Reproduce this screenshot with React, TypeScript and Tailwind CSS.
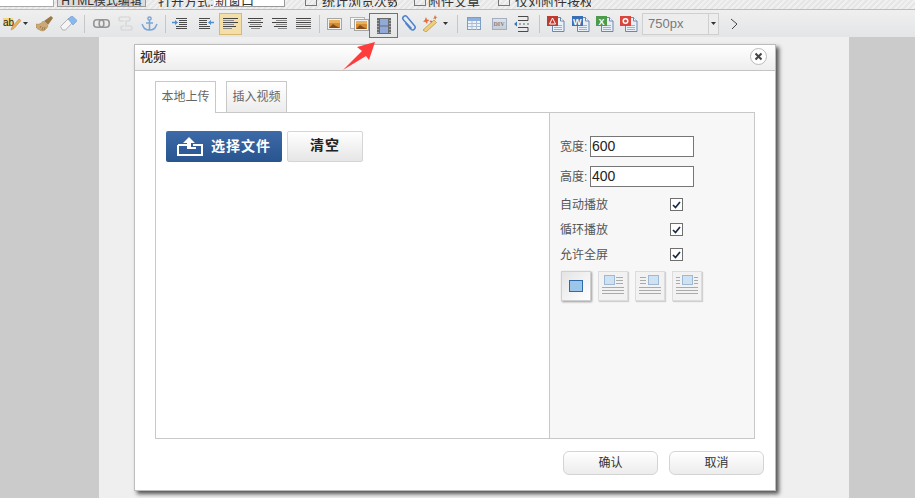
import React from "react";

const S = ({ w = "w-6", children }: { w?: string; children?: React.ReactNode }) => (
  <div className={`${w} h-full flex items-center justify-center shrink-0`}>{children}</div>
);
const Sep = ({ ml }: { ml: string }) => <div className={`${ml} w-px h-[18px] bg-[#c4c6c8] shrink-0`} />;

const Caret = () => (
  <svg width="5" height="3" viewBox="0 0 5 3" className="shrink-0"><path d="M0 0h5L2.500 3z" fill="#333" /></svg>
);

const Lines = ({ rows }: { rows: [number, number][] }) => (
  <svg width="15" height="13" viewBox="0 0 15 13">
    {rows.map(([x, w], i) => (
      <rect key={i} x={x} y={i * 2 + 1} width={w} height="1" fill={i % 2 ? "#8a8a8a" : "#444"} />
    ))}
  </svg>
);

const Photo = ({ stack }: { stack?: boolean }) => (
  <svg width={stack ? 19 : 15} height="14" viewBox={stack ? "0 0 19 14" : "0 0 15 14"}>
    {stack && <rect x="0.500" y="0.500" width="14" height="11" fill="#f6f6f6" stroke="#b5b5b5" />}
    <g transform={stack ? "translate(4 2)" : "translate(0 1)"}>
      <rect x="0.500" y="0.500" width="14" height="11" fill="#f1f1f1" stroke="#a5a5a5" />
      <rect x="2" y="2" width="11" height="8" fill="#d88a33" />
      <rect x="2" y="2" width="11" height="3" fill="#eab15c" />
      <path d="M2 10l4-4 3 2 4 2z" fill="#7d4c22" />
    </g>
  </svg>
);

const Doc = ({ color, children }: { color: string; children?: React.ReactNode }) => (
  <svg width="18" height="17" viewBox="0 0 18 17">
    <path d="M5.500 2.500h8l3.500 3.500v10.500h-11.500z" fill="#e9eff7" stroke="#6d87ab" />
    <path d="M13.500 2.500V6H17" fill="#fff" stroke="#6d87ab" />
    <path d="M7 10.500h8M7 12.500h8M7 14.500h8" stroke="#9fb2cc" />
    <rect x="0" y="1" width="11" height="10" fill={color} />
    {children}
  </svg>
);

const Mini = ({ kind }: { kind: number }) => {
  const active = kind === 0;
  const ix = kind === 1 ? 3 : kind === 2 ? 10 : 7;
  return (
    <div
      className={`w-[30px] h-[30px] flex items-center justify-center border ${
        active
          ? "bg-gradient-to-br from-[#e4e4e4] to-white border-[#cfcfcf] shadow-[1px_1px_2px_#999]"
          : "bg-[#f2f2f2] border-[#dcdcdc] shadow-[1px_1px_1px_#d0d0d0]"
      }`}
    >
      {active ? (
        <svg width="14" height="12" viewBox="0 0 14 12">
          <rect x="0.500" y="0.500" width="13" height="11" fill="#9cc5ea" stroke="#2e6aa8" />
        </svg>
      ) : (
        <svg width="24" height="22" viewBox="0 0 24 22">
          <rect x={ix + 0.5} y="0.500" width="10" height="9" fill="#cfe2f3" stroke="#9db9d3" />
          <path
            d={
              kind === 1
                ? "M15 2.500h7M15 5.500h7M15 8.500h7"
                : kind === 2
                ? "M2 2.500h6M2 5.500h6M2 8.500h6"
                : "M1 2.500h4M1 5.500h4M1 8.500h4M19 2.500h4M19 5.500h4M19 8.500h4"
            }
            stroke="#aaa"
          />
          <path d="M1 12.500h22M1 15.500h22M1 18.500h22" stroke="#aaa" />
        </svg>
      )}
    </div>
  );
};

const Check = () => (
  <div className="w-[13px] h-[13px] border border-[#6f6f6f] bg-white flex items-center justify-center">
    <svg width="9" height="8" viewBox="0 0 9 8"><path d="M1 4l2.500 2.500L8 1" fill="none" stroke="#1a2a44" strokeWidth="1.700" /></svg>
  </div>
);

const Field = ({ label, value }: { label: string; value: string }) => (
  <div className="flex items-center h-[21px]">
    <span className="w-[30px] text-[12px] text-[#555] leading-none">{label}:</span>
    <div className="w-[104px] h-[21px] border border-[#767676] bg-white pl-px text-[14px] leading-[19px] text-[#222] font-['Liberation_Sans',sans-serif]">
      {value}
    </div>
  </div>
);

const CheckRow = ({ label }: { label: string }) => (
  <div className="flex items-center h-[25px]">
    <span className="w-[110px] text-[12px] text-[#555] leading-none">{label}</span>
    <Check />
  </div>
);

export default function App() {
  return (
    <div className="relative w-[915px] h-[498px] overflow-hidden bg-[#cbcbcb] flex flex-col font-['Liberation_Sans','Noto_Sans_CJK_SC',sans-serif]">
      {/* clipped row above the toolbar */}
      <div className="h-[10px] shrink-0 overflow-hidden border-b border-[#bdbdbd] flex items-end bg-[repeating-linear-gradient(135deg,#e6e6e6_0px,#e6e6e6_2px,#f0f0f0_2px,#f0f0f0_4px)] text-[13px] text-[#333] leading-none">
        <div className="w-[54px] h-[7px] bg-white border-r border-b border-[#aaa] self-start shrink-0" />
        <div className="ml-[3px] w-[89px] h-[7px] self-start shrink-0 bg-[#dcdcdc] border border-t-0 border-[#999] overflow-hidden flex justify-center items-end">
          <span className="text-[12px] text-[#333] whitespace-nowrap -mb-px">HTML模式编辑</span>
        </div>
        <div className="ml-[12px] w-[56px] h-[7px] self-start shrink-0 overflow-hidden flex items-end whitespace-nowrap"><span className="-mb-px">打开方式:</span></div>
        <div className="w-[71px] h-[7px] self-start shrink-0 overflow-hidden bg-white flex items-end border-b border-r border-[#999] whitespace-nowrap pl-px">
          <span className="-mb-px">新窗口</span>
        </div>
        <div className="ml-[20px] w-[12px] h-[6px] self-start shrink-0 border border-t-0 border-[#777]" />
        <div className="ml-[5px] w-[75px] h-[7px] self-start shrink-0 overflow-hidden flex items-end whitespace-nowrap"><span className="-mb-px">统计浏览次数</span></div>
        <div className="ml-[17px] w-[12px] h-[6px] self-start shrink-0 border border-t-0 border-[#777]" />
        <div className="ml-[2px] w-[56px] h-[7px] self-start shrink-0 overflow-hidden flex items-end whitespace-nowrap"><span className="-mb-px">附件文章</span></div>
        <div className="ml-[14px] w-[12px] h-[6px] self-start shrink-0 border border-t-0 border-[#777]" />
        <div className="ml-[5px] w-[76px] h-[7px] self-start shrink-0 overflow-hidden flex items-end whitespace-nowrap"><span className="-mb-px">仅刘附件按权</span></div>
      </div>

      {/* toolbar */}
      <div className="h-[27px] shrink-0 flex items-center bg-gradient-to-b from-[#efefef] to-[#e3e5e7]">
        <S w="w-[32px]">
          <div className="flex items-center gap-[2px] -ml-[1px]">
            <svg width="18" height="14" viewBox="0 0 18 14">
              <rect x="0" y="1" width="10" height="8" fill="#f5d67c" />
              <text x="0" y="8.500" fontSize="10" fill="#222" fontFamily="Liberation Sans">ab</text>
              <path d="M8 13l1-3 7-8 2 1.500-7 8z" fill="#e8b25a" stroke="#b08050" strokeWidth=".5" />
            </svg>
            <Caret />
          </div>
        </S>
        <S>
          <svg width="17" height="16" viewBox="0 0 17 16">
            <path d="M0 8c3 1 6-1 7-3l5 5c-1 2-3 5-6 5-1 0-1-1-1-1l-1 .5-1-1.500-1 .5-1-2-1 .5z" fill="#cda875" stroke="#a17f4c" strokeWidth=".5" />
            <path d="M5 10l-1 2M7 11l-1 3M9 11l-1 3" stroke="#8d6b3b" strokeWidth=".7" />
            <path d="M8 5l7-5 2 2-5 7z" fill="#9a7746" />
          </svg>
        </S>
        <S>
          <svg width="17" height="15" viewBox="0 0 17 15">
            <path d="M.500 10.500L9 2l4 4-7.500 8h-3z" fill="#f5f5f5" stroke="#b2b2b2" />
            <path d="M8 3l3-2.500h2L16.500 4v1.500L13 9z" fill="#8ab8ea" stroke="#6a9bd4" strokeWidth=".6" />
          </svg>
        </S>
        <Sep ml="ml-[4px]" />
        <div className="ml-[4px]" />
        <S>
          <svg width="17" height="9" viewBox="0 0 17 9" fill="none" stroke="#959595" strokeWidth="1.600">
            <rect x=".8" y=".8" width="10" height="7.400" rx="3" /><rect x="6.200" y=".8" width="10" height="7.400" rx="3" />
          </svg>
        </S>
        <S>
          <svg width="15" height="15" viewBox="0 0 15 15" fill="none" stroke="#dadada" strokeWidth="1.700">
            <path d="M6 5H3a2 2 0 0 1 0-4h7a2 2 0 0 1 0 4H8v5h4a2 2 0 0 1 0 4H5a2 2 0 0 1 0-4h1" />
          </svg>
        </S>
        <S>
          <svg width="17" height="16" viewBox="0 0 17 16" fill="none" stroke="#7aa5d6" strokeWidth="1.500">
            <circle cx="8.500" cy="2.500" r="1.600" /><path d="M8.500 4v10M5 7h7M1 8l1 2c1 3 3 4 6.500 4s5.500-1 6.500-4l1-2" />
          </svg>
        </S>
        <Sep ml="ml-[4px]" />
        <div className="ml-px" />
        <S>
          <svg width="15" height="13" viewBox="0 0 15 13">
            <path d="M4 1.500h11M7 3.500h8M7 5.500h8M7 7.500h8M4 9.500h11M4 11.500h11" stroke="#4a4a4a" />
            <path d="M0 2h1.500v2.500H5V6H1.500v2.500H0z" fill="none" />
            <path d="M6 5.500L3 3v1.800H0v1.400h3V8z" fill="#4a90d9" />
          </svg>
        </S>
        <div className="ml-[3px]" />
        <S>
          <svg width="15" height="13" viewBox="0 0 15 13">
            <path d="M0 1.500h11M0 3.500h8M0 5.500h8M0 7.500h8M0 9.500h11M0 11.500h11" stroke="#4a4a4a" />
            <path d="M9 5.500L12 3v1.800h3v1.400h-3V8z" fill="#4a90d9" />
          </svg>
        </S>
        <div className="ml-px" />
        <div className="w-[23px] h-[22px] shrink-0 bg-[#f5dfa9] border border-[#d9b86e] flex items-center justify-center">
          <Lines rows={[[0, 15], [0, 11], [0, 15], [0, 11], [0, 13], [0, 9]]} />
        </div>
        <div className="ml-px" />
        <S><Lines rows={[[0, 15], [2, 11], [0, 15], [2, 11], [1, 13], [3, 9]]} /></S>
        <div className="ml-px" />
        <S w="w-[23px]"><Lines rows={[[0, 15], [4, 11], [0, 15], [4, 11], [2, 13], [6, 9]]} /></S>
        <S><Lines rows={[[0, 15], [0, 15], [0, 15], [0, 15], [0, 15], [0, 15]]} /></S>
        <Sep ml="ml-[4px]" />
        <div className="ml-[2px]" />
        <S><Photo /></S>
        <div className="ml-[3px]" />
        <S w="w-[20px]"><Photo stack /></S>
        <div className="relative z-10 self-start mt-[3px] w-[29px] h-[25px] shrink-0 border border-[#e8403a] flex items-center justify-center">
          <svg width="14" height="16" viewBox="0 0 14 16">
            <rect width="14" height="16" fill="#6b6b6b" />
            <rect x="3" y="1" width="8" height="6.500" fill="#8fa9d8" />
            <rect x="3" y="8.500" width="8" height="6.500" fill="#8fa9d8" />
            <path d="M1 2v1M1 5v1M1 8v1M1 11v1M1 14v1M13 2v1M13 5v1M13 8v1M13 11v1M13 14v1" stroke="#ddd" />
          </svg>
        </div>
        <S w="w-[20px]">
          <svg width="15" height="17" viewBox="0 0 15 17" fill="none" stroke="#4d82cc" strokeWidth="1.500">
            <path d="M10.500 13.500L2.500 5a2.300 2.300 0 0 1 3.500-3.300l7.500 9a2.500 2.500 0 0 1-4 3.200L4.500 8" />
          </svg>
        </S>
        <S w="w-[33px]">
          <div className="flex items-center gap-[3px]">
            <svg width="18" height="17" viewBox="0 0 18 17">
              <path d="M1 15l11-10 2.500 2.500L4 17z" fill="#f0cf77" stroke="#a9853c" strokeWidth=".6" />
              <path d="M4 2l1 2.500 2.500.5-2 1.500-.5 2.500-1.500-2L1 6.500 2.800 5z" fill="#e2703a" />
              <path d="M13 0l.8 1.700L15.500 2l-1.500 1-.2 1.700L12.500 3.500 11 3.800 12 2.500z" fill="#e2703a" />
              <path d="M9 5l.5 1 1 .5-1 .5-.5 1-.5-1-1-.5 1-.5z" fill="#d9534f" />
            </svg>
            <Caret />
          </div>
        </S>
        <Sep ml="ml-[6px]" />
        <div className="ml-[4px]" />
        <S>
          <svg width="14" height="13" viewBox="0 0 14 13">
            <rect x=".5" y=".5" width="13" height="12" fill="#eef3fa" stroke="#7d9cc6" />
            <rect x="1" y="1" width="12" height="3" fill="#8fb0dc" />
            <path d="M1 6.500h12M1 9.500h12M5 4v9M9.500 4v9" stroke="#a9bcd6" />
          </svg>
        </S>
        <div className="ml-px" />
        <S>
          <div className="w-[15px] h-[12px] border border-[#a3aec0] bg-gradient-to-b from-[#dfe2e8] to-[#c8ccd3] flex items-center justify-center text-[6px] leading-none text-[#77808e] font-['Liberation_Serif',serif] font-bold">
            DIV
          </div>
        </S>
        <S w="w-[20px]">
          <svg width="15" height="16" viewBox="0 0 15 16" fill="none" stroke="#4a4a4a">
            <path d="M4 .5h10v4H4M4 15.500h10v-4H4" />
            <path d="M5 8h2M9 8h2M13 8h2" stroke="#666" />
            <path d="M0 8l3-2.500v5z" fill="#3a76b8" stroke="none" />
          </svg>
        </S>
        <Sep ml="ml-[8px]" />
        <div className="ml-[4px]" />
        <S>
          <Doc color="#bf3a30">
            <path d="M5.500 3l3 6h-6z" fill="none" stroke="#fff" />
          </Doc>
        </S>
        <div className="ml-px" />
        <S>
          <Doc color="#3b6fb5">
            <text x="1" y="9.500" fontSize="9" fill="#fff" fontWeight="bold" fontFamily="Liberation Sans">W</text>
          </Doc>
        </S>
        <S>
          <Doc color="#4d9a4d">
            <text x="2.500" y="9.500" fontSize="9" fill="#fff" fontWeight="bold" fontFamily="Liberation Sans">X</text>
          </Doc>
        </S>
        <S>
          <Doc color="#d9463e">
            <circle cx="5.500" cy="6" r="3" fill="#fff" /><circle cx="5.500" cy="6" r="1.500" fill="#d9463e" />
          </Doc>
        </S>
        <div className="ml-px w-[77px] h-[22px] shrink-0 border border-[#cfcfcf] bg-[#ededed] flex">
          <div className="flex-1 pl-[5px] text-[13px] leading-[20px] text-[#7a7a7a]">750px</div>
          <div className="w-[10px] border-l border-[#cfcfcf] flex items-center justify-center"><Caret /></div>
        </div>
        <div className="ml-[10px]">
          <svg width="10" height="12" viewBox="0 0 10 12" fill="none" stroke="#444"><path d="M2 1l6 5-5 5" /></svg>
        </div>
      </div>

      {/* page */}
      <div className="flex-1 flex pl-[99px]">
        <div className="w-[750px] h-full bg-[#efefef]" />
      </div>

      {/* dialog */}
      <div className="absolute left-[134px] top-[44px] w-[642px] h-[447px] bg-white border border-[#bcbcbc] shadow-[3px_3px_4px_#555] flex flex-col text-[#555]">
        <div className="h-[26px] shrink-0 border-b border-[#c4c4c4] bg-gradient-to-b from-white to-[#eeeeee] flex items-center pl-[5px] pr-[8px] pb-[2px] justify-between">
          <span className="text-[13px] font-medium text-[#333] leading-none">视频</span>
          <div className="w-[17px] h-[17px] rounded-full border border-[#bbb] bg-white flex items-center justify-center">
            <svg width="9" height="9" viewBox="0 0 9 9"><path d="M1.500 1.500l6 6M7.500 1.500l-6 6" stroke="#444" strokeWidth="2" /></svg>
          </div>
        </div>

        <div className="flex-1 pl-[20px] pr-[20px] pt-[10px] flex flex-col">
          <div className="flex h-[32px] items-end relative z-10 shrink-0">
            <div className="w-[61px] h-[32px] border border-b-0 border-[#c8c8c8] bg-white text-[12px] leading-[31px] text-center text-[#666]">本地上传</div>
            <div className="ml-[10px] w-[61px] h-[31px] mb-px border border-b-0 border-[#c8c8c8] bg-gradient-to-b from-white to-[#ececec] text-[12px] leading-[30px] text-center text-[#666]">插入视频</div>
          </div>
          <div className="-mt-px w-[600px] h-[327px] border border-[#c8c8c8] flex">
            <div className="w-[393px] shrink-0 pl-[10px] pt-[18px] flex items-start gap-[5px]">
              <div className="w-[116px] h-[31px] rounded-[2px] bg-gradient-to-b from-[#3d6ba8] to-[#28548f] flex items-center text-white">
                <svg width="26" height="21" viewBox="0 0 26 21" className="ml-[11px]">
                  <path d="M1 9v10h24V9h-9M10 9H1" fill="none" stroke="#fff" strokeWidth="2" />
                  <path d="M12 1L6 7h4v6h9v-2h-5V7h4z" fill="#fff" />
                </svg>
                <span className="ml-[8px] text-[14px] font-bold tracking-[1px] leading-none -mt-[2px]">选择文件</span>
              </div>
              <div className="w-[76px] h-[31px] rounded-[2px] border border-[#d5d5d5] bg-gradient-to-b from-white to-[#e6e6e6] text-[14px] font-bold tracking-[1px] text-[#222] leading-[27px] text-center">清空</div>
            </div>
            <div className="flex-1 border-l border-[#c8c8c8] bg-[#f7f7f7] pl-[10px] pt-[23px] flex flex-col">
              <Field label="宽度" value="600" />
              <div className="mt-[9px]"><Field label="高度" value="400" /></div>
              <div className="mt-[5px]">
                <CheckRow label="自动播放" />
                <CheckRow label="循环播放" />
                <CheckRow label="允许全屏" />
              </div>
              <div className="mt-[4px] ml-px flex gap-[7px]">
                <Mini kind={0} /><Mini kind={1} /><Mini kind={2} /><Mini kind={3} />
              </div>
            </div>
          </div>
          <div className="flex justify-end gap-[11px] mt-[12px] mr-[-9px]">
            <div className="w-[95px] h-[24px] rounded-[6px] border border-[#d4d4d4] bg-gradient-to-b from-white to-[#ececec] text-[12px] leading-[22px] text-center text-[#333]">确认</div>
            <div className="w-[95px] h-[24px] rounded-[6px] border border-[#d4d4d4] bg-gradient-to-b from-white to-[#ececec] text-[12px] leading-[22px] text-center text-[#333]">取消</div>
          </div>
        </div>
      </div>

      {/* annotation arrow */}
      <svg className="absolute left-[340px] top-[40px]" width="40" height="32" viewBox="0 0 40 32">
        <path d="M35 2L17 7l5 4L3 30l23-14 3 4z" fill="#ff3b3b" />
      </svg>
    </div>
  );
}
